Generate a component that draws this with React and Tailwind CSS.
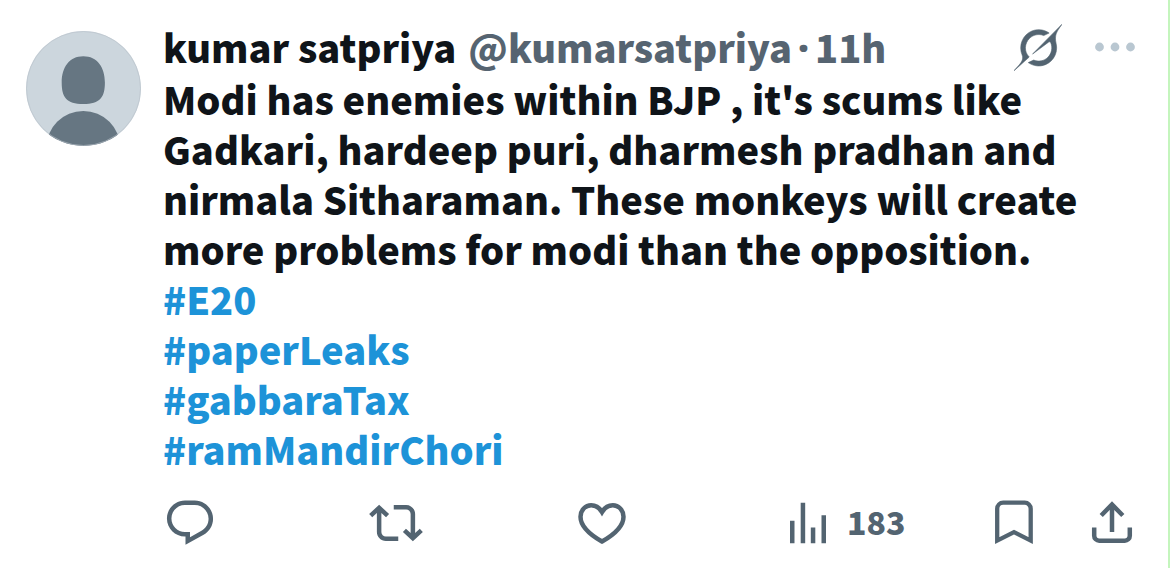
const tags = ["#E20", "#paperLeaks", "#gabbaraTax", "#ramMandirChori"];

function Glyph({ d }) {
  return (
    <svg viewBox="0 0 24 24" className="block size-[54px]" fill="currentColor" aria-hidden="true">
      <path d={d} />
    </svg>
  );
}

function Avatar() {
  return (
    <svg viewBox="0 0 115 115" className="block size-[115px] shrink-0" role="img" aria-label="Profile picture">
      <clipPath id="avatar-clip">
        <circle cx="57.5" cy="57.5" r="57.5" />
      </clipPath>
      <g clipPath="url(#avatar-clip)">
        <rect width="115" height="115" fill="#ccd6dd" />
        <path
          d="M57.3 25.3c-14 0-21.6 11-21.6 26.2 0 14.6 4.6 21.5 21.6 21.5s21.6-6.9 21.6-21.5c0-15.2-7.6-26.2-21.6-26.2z"
          fill="#667682"
        />
        <circle cx="57.3" cy="117" r="37" fill="#667682" />
      </g>
      <circle cx="57.5" cy="57.5" r="57" fill="none" stroke="#b9c2c9" strokeOpacity="0.6" />
    </svg>
  );
}

export default function App() {
  return (
    <main className="min-h-screen border-r-2 border-[#c4f5bd] bg-white font-['Noto_Sans_CJK_SC','Noto_Sans',sans-serif] text-[38px] leading-[50px] font-black text-[#0f1419]">
      <article className="flex gap-[22px] pt-[22px] pr-[29px] pb-[18px] pl-[26px]">
        <div className="pt-[9px]">
          <Avatar />
        </div>
        <div className="min-w-0 flex-1">
          <header className="mb-0.5 flex items-center">
            <div className="flex gap-3 whitespace-nowrap">
              <a href="#profile">kumar satpriya</a>
              <span className="flex gap-1.5 text-[#566471]">
                <span>@kumarsatpriya</span>
                <span className="font-['Noto_Sans',sans-serif]">·</span>
                <time>11h</time>
              </span>
            </div>
            <div className="mr-1 ml-auto flex items-center gap-[33px]">
              <button type="button" aria-label="Grok" className="text-[#536471]">
                <svg viewBox="0 0 33 32" className="block h-[47px] w-12" fill="currentColor" stroke="currentColor" strokeWidth="0.4" aria-hidden="true">
                  <path d="M12.745 20.54l10.97-8.19c.539-.4 1.307-.244 1.564.38 1.349 3.288.746 7.241-1.938 9.955-2.683 2.714-6.417 3.31-9.83 1.954l-3.728 1.745c5.347 3.697 11.84 2.782 15.898-1.324 3.219-3.255 4.216-7.692 3.284-11.693l.008.009c-1.351-5.878.332-8.227 3.782-13.031L33 0l-4.54 4.59v-.014L12.743 20.544m-2.263 1.987c-3.837-3.707-3.175-9.446.1-12.755 2.42-2.449 6.388-3.448 9.852-1.979l3.72-1.737c-.67-.49-1.53-1.017-2.515-1.387-4.455-1.854-9.789-.931-13.41 2.728-3.483 3.523-4.579 8.94-2.697 13.561 1.405 3.454-.899 5.898-3.22 8.364C1.49 30.2.666 31.074 0 32l10.478-9.466" />
                </svg>
              </button>
              <button type="button" aria-label="More" className="text-[#b9c7d1]">
                <svg viewBox="0 0 40 10" className="block h-[10px] w-10" fill="currentColor" aria-hidden="true">
                  <circle cx="4.5" cy="5" r="4.4" />
                  <circle cx="20" cy="5" r="4.4" />
                  <circle cx="35.5" cy="5" r="4.4" />
                </svg>
              </button>
            </div>
          </header>
          <p>
            Modi has enemies within BJP , it's scums like Gadkari, hardeep puri, dharmesh pradhan and
            nirmala Sitharaman. These monkeys will create more problems for modi than the opposition.
          </p>
          <ul className="text-[#1d93d8]">
            {tags.map((tag) => (
              <li key={tag}>
                <a href="#hashtag">{tag}</a>
              </li>
            ))}
          </ul>
          <footer className="mt-[22px] flex text-[#536471]">
            <div className="flex flex-1">
              <button type="button" aria-label="Reply">
                <Glyph d="M1.751 10c0-4.42 3.584-8 8.005-8h4.366c4.49 0 8.129 3.64 8.129 8.13 0 2.96-1.607 5.68-4.196 7.11l-8.054 4.46v-3.69h-.067c-4.49.1-8.183-3.51-8.183-8.01zm8.005-6c-3.317 0-6.005 2.69-6.005 6 0 3.37 2.77 6.08 6.138 6.01l.351-.01h1.761v2.3l5.087-2.81c1.951-1.08 3.163-3.13 3.163-5.36 0-3.39-2.744-6.13-6.129-6.13H9.756z" />
              </button>
            </div>
            <div className="flex flex-1">
              <button type="button" aria-label="Repost">
                <Glyph d="M4.5 3.88l4.432 4.14-1.364 1.46L5.5 7.55V16c0 1.1.896 2 2 2H13v2H7.5c-2.209 0-4-1.79-4-4V7.55L1.432 9.48.068 8.02 4.5 3.88zM16.5 6H11V4h5.5c2.209 0 4 1.79 4 4v8.45l2.068-1.93 1.364 1.46-4.432 4.14-4.432-4.14 1.364-1.46 2.068 1.93V8c0-1.1-.896-2-2-2z" />
              </button>
            </div>
            <div className="flex flex-1">
              <button type="button" aria-label="Like">
                <svg viewBox="0 0 54 54" className="block size-[54px]" fill="none" stroke="currentColor" strokeWidth="4.5" aria-hidden="true">
                  <path d="M27 45.5C13.5 37.8 5.5 29.7 5.5 20.7 5.5 14 10.5 9.2 16.2 9.2 20.5 9.2 24.5 11.7 27 16 29.5 11.7 33.5 9.2 37.8 9.2 43.5 9.2 48.5 14 48.5 20.7 48.5 29.7 40.5 37.8 27 45.5z" />
                </svg>
              </button>
            </div>
            <div className="flex flex-1">
              <button type="button" aria-label="183 views" className="flex items-center gap-3">
                <Glyph d="M8.75 21V3h2v18h-2zM18 21V8.5h2V21h-2zM4 21l.004-10h2L6 21H4zm9.248 0v-7h2v7h-2z" />
                <span className="pb-1 text-[32px]">183</span>
              </button>
            </div>
            <div className="flex gap-11">
              <button type="button" aria-label="Bookmark">
                <svg viewBox="0 0 54 54" className="block size-[54px]" fill="none" stroke="currentColor" strokeWidth="4.3" aria-hidden="true">
                  <path d="M10.2 44.6V12.7a6 6 0 0 1 6-6H37.7a6 6 0 0 1 6 6V44.6L27 36.2z" />
                </svg>
              </button>
              <button type="button" aria-label="Share">
                <svg viewBox="0 0 54 54" className="block size-[54px]" fill="none" stroke="currentColor" strokeWidth="4.5" aria-hidden="true">
                  <path d="M27 36V8.5M16.2 19.5L27 8.5 37.8 19.5M9.2 31.5v8.2a5 5 0 0 0 5 5H39.8a5 5 0 0 0 5-5V31.5" />
                </svg>
              </button>
            </div>
          </footer>
        </div>
      </article>
    </main>
  );
}
